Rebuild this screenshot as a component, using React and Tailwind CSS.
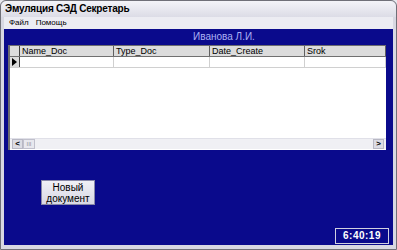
const cols = [
    { name: "Name_Doc", w: "w-[94px]" },
    { name: "Type_Doc", w: "w-[96px]" },
    { name: "Date_Create", w: "w-[95px]" },
    { name: "Srok", w: "flex-1" },
];

const App = () => {
    return (
        <div className="w-[397px] h-[250px] bg-[#e8e8ee] overflow-hidden" style={{ fontFamily: "'Liberation Sans', Arial, sans-serif" }}>
            <div className="w-full h-full flex flex-col rounded-t-[6px] border border-[#707078] bg-[#d8d8e2]">
                {/* title */}
                <div className="h-[16px] flex items-center pl-[4px] bg-gradient-to-b from-[#f4f4f8] to-[#dcdce6] rounded-t-[6px]">
                    <span className="text-[10px] font-bold text-black leading-none tracking-[-0.2px]">Эмуляция СЭД Секретарь</span>
                </div>
                {/* menu */}
                <div className="h-[12px] flex items-center gap-[7px] pl-[5px] bg-[#ececf2] mx-[3px]">
                    <span className="text-[8px] text-black leading-none">Файл</span>
                    <span className="text-[8px] text-black leading-none">Помощь</span>
                </div>
                {/* client area */}
                <div className="flex-1 mx-[3px] mb-[4px] bg-[#0a0a8c] flex flex-col relative">
                    <div className="h-[16px] flex items-center pl-[189px]">
                        <span className="text-[10px] text-[#aab0f4] leading-none">Иванова Л.И.</span>
                    </div>
                    {/* grid */}
                    <div className="ml-[4px] w-[378px] h-[105px] bg-white flex flex-col border-l-2 border-t border-[#6c6c70]">
                        <div className="h-[11px] flex bg-[#dcdcdc] border-b border-[#707070]">
                            <div className="w-[10px] border-r border-[#404040]"></div>
                            {cols.map((c) => (
                                <div key={c.name} className={`${c.w} border-r border-[#606060] pl-[2px] text-[9px] leading-[11px] text-black`}>{c.name}</div>
                            ))}
                        </div>
                        <div className="h-[11px] flex border-b border-[#d0d0d0]">
                            <div className="w-[10px] bg-[#dcdcdc] border-r border-[#404040] flex items-center justify-center">
                                <svg width="5" height="8" viewBox="0 0 5 8"><path d="M0 0 L5 4 L0 8 Z" fill="#000" /></svg>
                            </div>
                            {cols.map((c) => (
                                <div key={c.name} className={`${c.w} border-r border-[#d0d0d0]`}></div>
                            ))}
                        </div>
                        <div className="flex-1"></div>
                        {/* scrollbar */}
                        <div className="h-[11px] flex items-center px-[2px] bg-[#f0f0f4] border-t border-[#e0e0e8] mb-[1px]">
                            <div className="w-[11px] h-[10px] bg-[#dcdce4] border border-[#b8b8c4] flex items-center justify-center text-[8px] font-bold leading-none">&lt;</div>
                            <div className="w-[12px] h-[10px] bg-[#e8e8ee] border border-[#c0c0cc] flex items-center justify-center text-[6px] text-[#909098] leading-none">III</div>
                            <div className="flex-1"></div>
                            <div className="w-[11px] h-[10px] bg-[#dcdce4] border border-[#b8b8c4] flex items-center justify-center text-[8px] font-bold leading-none">&gt;</div>
                        </div>
                    </div>
                    {/* new doc button */}
                    <div className="ml-[37px] mt-[30px] w-[54px] h-[25px] bg-gradient-to-b from-[#f0f0f6] to-[#d8d8e4] border border-[#8888a8] flex flex-col items-center justify-center">
                        <span className="text-[10px] text-black leading-[11px]">Новый</span>
                        <span className="text-[10px] text-black leading-[11px]">документ</span>
                    </div>
                    <div className="flex-1"></div>
                    {/* clock */}
                    <div className="self-end mr-[4px] mb-[1px] w-[54px] h-[16px] border border-[#d0d0e0] flex items-center justify-center">
                        <span className="text-[10px] font-bold text-white leading-none tracking-[0.5px]">6:40:19</span>
                    </div>
                </div>
            </div>
        </div>
    );
};

export default App;
